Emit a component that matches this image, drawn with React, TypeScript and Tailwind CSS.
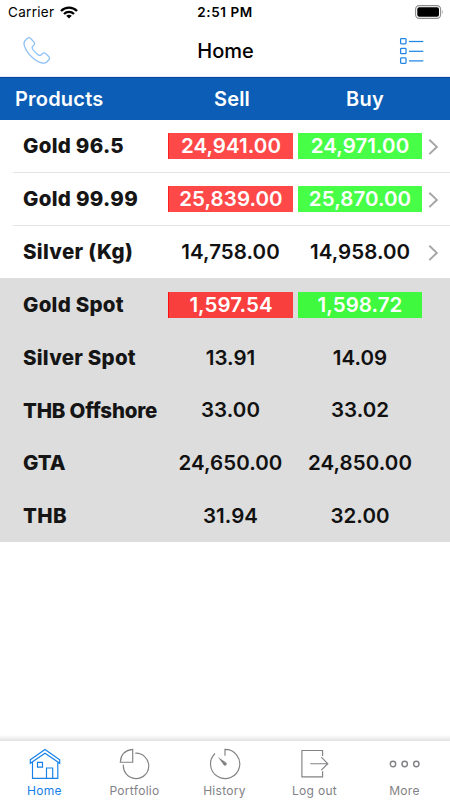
import React from "react";

type Product = { name: string; sell: string; buy: string; flash: boolean; linked: boolean; nameClass: string };

const products: Product[] = [
  { name: "Gold 96.5", sell: "24,941.00", buy: "24,971.00", flash: true, linked: true, nameClass: "tracking-[0.27px]" },
  { name: "Gold 99.99", sell: "25,839.00", buy: "25,870.00", flash: true, linked: true, nameClass: "tracking-[0.3px]" },
  { name: "Silver (Kg)", sell: "14,758.00", buy: "14,958.00", flash: false, linked: true, nameClass: "tracking-[0.32px]" },
  { name: "Gold Spot", sell: "1,597.54", buy: "1,598.72", flash: true, linked: false, nameClass: "tracking-[0.25px]" },
  { name: "Silver Spot", sell: "13.91", buy: "14.09", flash: false, linked: false, nameClass: "tracking-[0.25px]" },
  { name: "THB Offshore", sell: "33.00", buy: "33.02", flash: false, linked: false, nameClass: "tracking-[-0.2px]" },
  { name: "GTA", sell: "24,650.00", buy: "24,850.00", flash: false, linked: false, nameClass: "tracking-[0px]" },
  { name: "THB", sell: "31.94", buy: "32.00", flash: false, linked: false, nameClass: "tracking-[0.4px]" },
];

function Row({ p, last }: { p: Product; last: boolean }) {
  const price = "flex h-[26px] items-center justify-center text-[20.5px] font-semibold tracking-[0.06px] pt-px";
  const red = p.linked ? "border-l border-[#ff2020] bg-[#ff4848]" : "border-l border-[#ff1010] bg-[#f93e3e]";
  const green = p.linked ? "bg-[#48ff48]" : "bg-[#3ef93e]";
  return (
    <div className={`flex h-[52.75px] ${p.linked ? "bg-white" : "bg-[#dddddd]"}`}>
      <div className={`ml-[13px] flex flex-1 items-center pl-[10px] ${p.linked && !last ? "border-b border-[#e4e4e4]" : ""}`}>
        <div className={`w-[145px] whitespace-nowrap pt-[1.5px] text-[20.5px] font-extrabold text-[#151515] ${p.nameClass}`}>{p.name}</div>
        <div className={`${price} w-[125px] ${p.flash ? "text-white " + red : "text-[#111111]"}`}>{p.sell}</div>
        <div className={`${price} ml-[5px] w-[124px] ${p.flash ? "text-white " + green : "text-[#111111]"}`}>{p.buy}</div>
        {p.linked && (
          <svg className="ml-[6px] mt-[2px] h-[18px] w-[12px]" viewBox="0 0 12 18" fill="none" stroke="#a6a6a9" strokeWidth="2">
            <path d="M1.3 1.7 8.8 8.9 1.3 16.1" />
          </svg>
        )}
      </div>
    </div>
  );
}

function Tab({ label, active, children }: { label: string; active?: boolean; children: React.ReactNode }) {
  return (
    <div className={`flex w-[90px] flex-col items-center ${active ? "text-[#1680e8]" : "text-[#828286]"}`}>
      <svg className="mt-[6px] h-[34px] w-[34px]" viewBox="0 0 34 34" fill="none" stroke="currentColor" strokeWidth="1.15">
        {children}
      </svg>
      <div className="mt-[2px] pr-px text-[12px] leading-[16px] tracking-[0.3px]">{label}</div>
    </div>
  );
}

export default function App() {
  return (
    <div className="flex h-[800px] w-[450px] flex-col overflow-hidden bg-white font-['Inter','Liberation_Sans',sans-serif] text-black">
      <div className="grid h-[25px] grid-cols-3 items-center px-[8px] text-[13.5px]">
        <div className="flex items-center gap-[6px] tracking-[0.3px]">
          Carrier
          <svg className="h-[13px] w-[18px]" viewBox="0 0 18 13" fill="none" stroke="#000" strokeWidth="2.3">
            <path d="M1 5C5.5 .5 12.5 .5 17 5" />
            <path d="M4 8C6.8 5.2 11.2 5.2 14 8" />
            <path d="M9 12.6 6.2 9.8Q9 7.7 11.8 9.8Z" fill="#000" stroke="none" />
          </svg>
        </div>
        <div className="text-center text-[13.5px] font-semibold tracking-[0.55px]">2:51 PM</div>
        <svg className="ml-auto mr-[-2px] mt-[-2px] h-[14px] w-[29px]" viewBox="0 0 29 14">
          <rect x=".6" y=".6" width="25" height="12.8" rx="3.6" fill="white" stroke="#8c8c8c" strokeWidth="1.1" />
          <rect x="2.3" y="2.3" width="21.7" height="9.4" rx="2" fill="#000" />
          <path d="M27.2 4.7q1.7 2.3 0 4.6z" fill="#999" />
        </svg>
      </div>
      <div className="flex h-[52px] items-center border-b border-[#e9edf3] pl-[22px] pr-[25px]">
        <svg className="h-[30px] w-[30px]" viewBox="0 0 30 30" fill="none" stroke="#8fc2f6" strokeWidth="1.3" strokeLinejoin="round">
          <path d="M3.5 4.2 5.8 2.1Q7.2 1.2 8.5 2.3L12 6.1Q13.2 7.6 12.1 8.9L10.3 10.8Q9.8 12 10.8 13.5Q12.8 16.5 16.3 18.9Q17.7 19.8 18.9 19.1L21 17.2Q22.3 16.4 23.6 17.4L27 20.7Q28 22 27.2 23.3L25.1 25.7Q23.5 27.5 20.5 27Q15.5 26.3 10.1 21.3Q4 15.6 2.2 9.1Q1.4 6 3.5 4.2Z" />
        </svg>
        <div className="flex-1 text-center text-[20px] font-medium">Home</div>
        <svg className="h-[28px] w-[26px]" viewBox="0 0 26 28" fill="none" stroke="#1f86e6" strokeWidth="1.25">
          {[1.5, 11.3, 20.9].map((y) => (
            <React.Fragment key={y}>
              <rect x="1.6" y={y} width="5.4" height="5.4" rx=".8" />
              <path d={`M10 ${y + 3}h14.3`} />
            </React.Fragment>
          ))}
        </svg>
      </div>
      <div className="flex h-[43px] items-center border-t border-[#0448a4] bg-[#0b5db5] text-[20px] font-semibold tracking-[0.2px] text-white">
        <div className="w-[168px] pl-[15px]">Products</div>
        <div className="w-[128px] text-center">Sell</div>
        <div className="w-[138px] text-center">Buy</div>
      </div>
      <div className="flex flex-col">
        {products.map((p, i) => <Row key={p.name} p={p} last={i === 2} />)}
      </div>
      <div className="flex-1" />
      <div className="h-[6px] bg-gradient-to-b from-white to-[#e2e2e2]" />
      <div className="flex h-[59px] bg-white">
        <Tab label="Home" active>
          <path d="M2.3 12.8 17 2.5l14.7 10.3v3.5L17 6.2 2.3 16.3zM4.5 15v16.4h25.3V15M18.5 31.4V21h6.2v10.4M9.5 15.4h5v4.7h-5z" />
        </Tab>
        <Tab label="Portfolio">
          <path d="M14.7 15.2V2.4Q3 3.6 2.3 15.2zM17.2 6.2A12.7 12.7 0 1 1 5.4 17.6" />
        </Tab>
        <Tab label="History">
          <path d="M17 8.7V2.4A14.6 14.6 0 1 1 7 6.5" />
          <path d="M9.9 9.9 18 15.6Q19.3 17 18.3 18.1Q17.1 19.3 15.7 17.9z" fill="currentColor" stroke="none" />
        </Tab>
        <Tab label="Log out">
          <path d="M24.6 9V3.5H3.9v26.3h20.7v-5.6M12.3 16.7h17.4M23.3 10.2l6.5 6.5-6.5 6.5" />
        </Tab>
        <Tab label="More">
          <g strokeWidth="1.4">
            <circle cx="5" cy="17" r="2.7" />
            <circle cx="16.7" cy="17" r="2.7" />
            <circle cx="28.3" cy="17" r="2.7" />
          </g>
        </Tab>
      </div>
    </div>
  );
}
